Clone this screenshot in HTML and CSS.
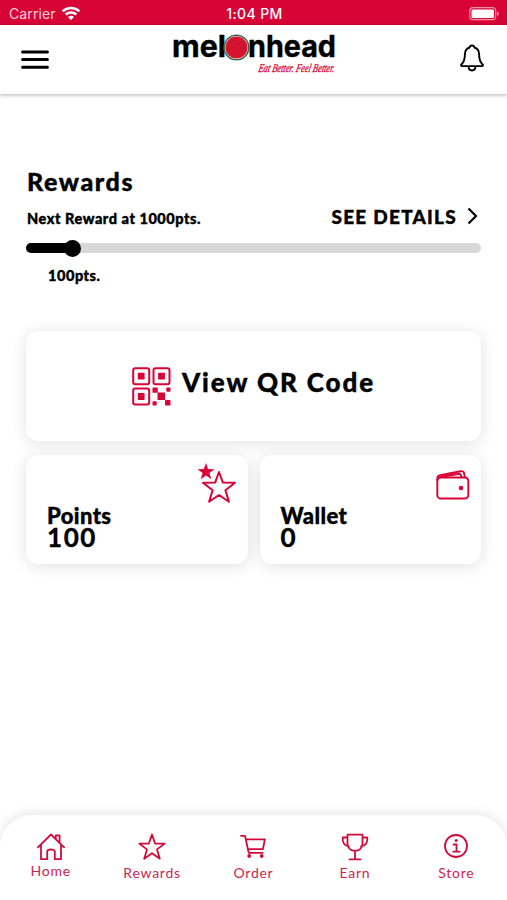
FILE: index.html
```html
<!DOCTYPE html>
<html lang="en">
<head>
    <meta charset="UTF-8">
    <meta name="viewport" content="width=device-width, initial-scale=1.0">
    <title>Melonhead Rewards</title>
    <link rel="stylesheet" href="styles.css">
</head>
<body>
    <div class="status-bar">
        <div class="carrier">
            <span>Carrier</span>
            <svg width="20" height="15" viewBox="0 0 20 15" fill="none" stroke="#fff" stroke-width="2.5">
                <path d="M1.7 5.3C6.3 .9 13.7 .9 18.3 5.3M4.7 8.5c3-2.8 7.6-2.8 10.6 0"/>
                <path d="M7 11c1.800-1.600 4.200-1.600 6 0l-3 3z" fill="#fff" stroke="none"/>
            </svg>
        </div>
        <div class="time">1:04 PM</div>
        <div class="battery">
            <svg width="31" height="14" viewBox="0 0 31 14">
                <rect x=".7" y=".7" width="26" height="12" rx="3.500" fill="none" stroke="#f291a8" stroke-width="1.200"/>
                <rect x="2.500" y="2.500" width="22.500" height="8.500" rx="1.500" fill="#fff"/>
                <path d="M28 4.500c2.400.8 2.400 3.700 0 4.500z" fill="#f291a8"/>
            </svg>
        </div>
    </div>

    <header class="header">
        <svg class="menu-icon" width="28" height="20" viewBox="0 0 28 20" stroke="#000" stroke-width="3" stroke-linecap="round">
            <path d="M1.600 2h24.800M1.600 9.600h24.800M1.600 17.300h24.800"/>
        </svg>
        <svg class="logo" width="168" height="54" viewBox="0 -4 168 54">
            <text class="logo-name" x="1" y="27" textLength="54" lengthAdjust="spacingAndGlyphs">mel</text>
            <text class="logo-name" x="77" y="27" textLength="88" lengthAdjust="spacingAndGlyphs">nhead</text>
            <circle cx="65.500" cy="17.500" r="12.300" fill="#f5e6de" stroke="#3c6b50" stroke-width="1.600"/>
            <circle cx="65.500" cy="17.500" r="11" fill="#d71432"/>
            <g fill="none" stroke="#a30f28" stroke-width="1" stroke-dasharray="1.500 2.500">
                <circle cx="65.500" cy="17.500" r="7.500"/>
                <circle cx="65.500" cy="17.500" r="4"/>
            </g>
            <text class="logo-tag" x="96" y="42.500" textLength="76" lengthAdjust="spacingAndGlyphs" transform="skewX(-12)">Eat Better. Feel Better.</text>
        </svg>
        <svg class="bell-icon" width="24" height="28" viewBox="0 0 24 28" fill="none" stroke="#000" stroke-width="1.900" stroke-linejoin="round">
            <path d="M12 1.500c-1.300 0-2.200.8-2.300 2C6.500 4.500 4.900 7 4.900 10.300c0 5.700-.7 7.700-3.500 10.200-.5.500-.3 1.600.6 1.600h20c.9 0 1.100-1.100.6-1.600-2.800-2.500-3.500-4.500-3.500-10.200 0-3.300-1.600-5.800-4.800-6.800-.1-1.200-1-2-2.300-2z"/>
            <path d="M8.600 22.500c.1 5.300 6.700 5.300 6.800 0"/>
        </svg>
    </header>

    <main class="content">
        <section class="rewards">
            <h1>Rewards</h1>
            <div class="reward-row">
                <span class="next-reward">Next Reward at 1000pts.</span>
                <a class="details">
                    <span>SEE DETAILS</span>
                    <svg width="11" height="18" viewBox="0 0 11 18" fill="none" stroke="#000" stroke-width="2.200">
                        <path d="M1.500 1.500 9 9l-7.500 7.500"/>
                    </svg>
                </a>
            </div>
            <div class="progress">
                <div class="progress-fill" style="width: 10%"></div>
            </div>
            <div class="progress-label">100pts.</div>
        </section>

        <section class="cards">
            <div class="card qr-card">
                <svg width="39" height="39" viewBox="0 0 39 39" fill="#d80436">
                    <g fill="none" stroke="#d80436" stroke-width="2">
                        <rect x="1.200" y="1.200" width="16" height="16" rx="2"/>
                        <rect x="21.500" y="1.200" width="16" height="16" rx="2"/>
                        <rect x="1.200" y="21.500" width="16" height="16" rx="2"/>
                    </g>
                    <rect x="5.800" y="5.800" width="6.800" height="6.800" rx=".7"/>
                    <rect x="26.100" y="5.800" width="6.800" height="6.800" rx=".7"/>
                    <rect x="5.800" y="26.100" width="6.800" height="6.800" rx=".7"/>
                    <rect x="20.500" y="20.500" width="5.300" height="5.300" rx=".6"/>
                    <rect x="34.300" y="20.500" width="4.200" height="4.200" rx=".8"/>
                    <rect x="25.500" y="25.500" width="7.500" height="7.500" rx=".6"/>
                    <rect x="20.500" y="34.300" width="4.200" height="4.200" rx=".8"/>
                    <rect x="33" y="33" width="5.500" height="5.500" rx=".8"/>
                </svg>
                <span>View QR Code</span>
            </div>
            <div class="card small-card">
                <svg class="card-icon" width="40" height="42" viewBox="0 0 40 42">
                    <path d="m9 0 2.100 6.100 6.400.1-5.100 3.900 1.900 6.200L9 12.600l-5.300 3.700 1.900-6.200L.5 6.200l6.400-.1z" fill="#d80436"/>
                    <path d="m22 9 3.900 10.600 12.100.2-9.600 7.400 3.500 11.600L22 32l-9.900 6.800 3.500-11.600L6 19.800l12.100-.2z" fill="none" stroke="#d80436" stroke-width="2" stroke-linejoin="round"/>
                </svg>
                <div class="card-title">Points</div>
                <div class="card-value">100</div>
            </div>
            <div class="card small-card wallet">
                <svg class="card-icon" width="34" height="30" viewBox="0 0 34 30" fill="none" stroke="#d80436" stroke-width="1.900" stroke-linejoin="round">
                    <rect x="1.300" y="7.500" width="31" height="21" rx="3.500"/>
                    <path d="M1.300 11V8.500c0-2 1-3.100 3-3.400L24.500 1.200c2-.4 3.400.5 3.700 2.300l.6 3.800M3.500 7.300l19.500-3.500c1.500 0 2.200 1.200 2.600 3.700"/>
                    <circle cx="25" cy="18" r="2.300" fill="#d80436" stroke="none"/>
                </svg>
                <div class="card-title">Wallet</div>
                <div class="card-value">0</div>
            </div>
        </section>
    </main>

    <nav class="tab-bar">
        <a class="tab home">
            <svg width="28" height="28" viewBox="0 0 28 28">
                <path d="M.9 14.300 14 1.500l13.100 12.800M4 12.500v13.700h6.200v-7.700c0-2.700 7.600-2.700 7.600 0v7.700H24V12.500M18.800 5.500V2.300h3.800v7"/>
            </svg>
            <span>Home</span>
        </a>
        <a class="tab">
            <svg width="28" height="28" viewBox="0 0 28 28">
                <path d="m14 1.500 3.100 9 9.600.1-7.700 5.800 2.800 9.300L14 20.200l-7.800 5.500L9 16.400l-7.700-5.800 9.600-.1z"/>
            </svg>
            <span>Rewards</span>
        </a>
        <a class="tab">
            <svg width="28" height="28" viewBox="0 0 28 28">
                <path d="M2 2.800h4l3.700 17h14M6.700 6.300h19.200l-2 9.800H8.900"/>
                <circle cx="10.200" cy="23" r="1.900" class="solid"/>
                <circle cx="22.700" cy="23" r="1.900" class="solid"/>
            </svg>
            <span>Order</span>
        </a>
        <a class="tab">
            <svg width="28" height="28" viewBox="0 0 28 28">
                <path d="M6.500 1.600h15v9.500c0 9-15 9-15 0zM6.500 4.500H1.700c-.4 5 1.700 8.500 6.300 8.800M21.500 4.500h4.800c.4 5-1.700 8.500-6.300 8.800M14 18v8M8.500 26.300h11"/>
            </svg>
            <span>Earn</span>
        </a>
        <a class="tab">
            <svg width="28" height="28" viewBox="0 0 28 28">
                <circle cx="14" cy="13" r="11"/>
                <path d="M11.500 11.500h3v7M11.200 18.700h6.300"/>
                <circle cx="14.200" cy="7.600" r="1.500" class="solid"/>
            </svg>
            <span>Store</span>
        </a>
    </nav>
</body>
</html>
```
FILE: styles.css
```css
* {
    margin: 0;
    padding: 0;
    box-sizing: border-box;
}

body {
    font-family: Lato, "Open Sans", sans-serif;
    background-color: #fff;
    color: #000;
    height: 900px;
    display: flex;
    flex-direction: column;
    overflow: hidden;
}

svg {
    display: block;
    flex-shrink: 0;
}

/* Status bar */
.status-bar {
    height: 25px;
    padding: 2px 7px 0 9px;
    background-color: #d80436;
    color: #fff;
    font-family: Inter, sans-serif;
    font-size: 14px;
    display: grid;
    grid-template-columns: 1fr auto 1fr;
    align-items: center;
}

.carrier {
    display: flex;
    align-items: center;
    gap: 5px;
    color: #fbd0da;
    letter-spacing: 0.1px;
}

.time {
    font-weight: 500;
    letter-spacing: 0.4px;
}

.battery {
    justify-self: end;
}

/* Header */
.header {
    height: 69px;
    padding: 0 23px 0 21px;
    display: flex;
    justify-content: space-between;
    box-shadow: 0 1px 4px rgba(0, 0, 0, 0.32);
}

.menu-icon {
    margin-top: 25px;
}

.logo {
    margin-top: 1px;
    overflow: visible;
}

.logo-name {
    font-family: Inter, sans-serif;
    font-size: 30px;
    font-weight: 700;
    stroke: #000;
    stroke-width: 0.4px;
    stroke-linejoin: round;
}

.logo-tag {
    font-family: "Liberation Serif", serif;
    font-size: 12px;
    font-style: italic;
    fill: #d80436;
    stroke: #d80436;
    stroke-width: 0.3px;
}

.bell-icon {
    margin-top: 19px;
}

/* Rewards */
.content {
    flex: 1;
    padding: 72px 26px 0;
}

h1,
.next-reward,
.progress-label,
.details,
.qr-card,
.card-title,
.card-value {
    -webkit-text-stroke: 0.4px #000;
}

h1 {
    padding-left: 1px;
    font-size: 25px;
    line-height: 30px;
    font-weight: 900;
    letter-spacing: 1.6px;
}

.reward-row {
    height: 39px;
    margin-top: 1px;
    padding: 0 3px 0 1px;
    display: flex;
    justify-content: space-between;
    align-items: center;
}

.next-reward,
.progress-label {
    font-size: 14.5px;
    font-weight: 900;
    letter-spacing: 0.55px;
}

.next-reward {
    padding-top: 3px;
}

.details {
    display: flex;
    align-items: center;
    gap: 10px;
    font-size: 19px;
    font-weight: 900;
    letter-spacing: 1.25px;
}

.details svg {
    margin-bottom: 2px;
}

.progress {
    height: 10px;
    margin-top: 7px;
    background-color: #d8d8d8;
    border-radius: 5px;
}

.progress-fill {
    position: relative;
    height: 10px;
    background-color: #000;
    border-radius: 5px;
}

.progress-fill::after {
    content: "";
    position: absolute;
    top: -3px;
    right: -9px;
    width: 17px;
    height: 17px;
    background-color: #000;
    border-radius: 50%;
}

.progress-label {
    margin: 14px 0 0 22px;
    line-height: 18px;
}

/* Cards */
.cards {
    margin-top: 46px;
    display: grid;
    grid-template-columns: 1fr 1fr;
    gap: 14px 12px;
}

.card {
    height: 110px;
    background-color: #fff;
    border-radius: 12px;
    box-shadow: 0 2px 16px rgba(0, 0, 0, 0.12);
}

.small-card {
    height: 109px;
}

.qr-card {
    grid-column: 1 / 3;
    display: flex;
    justify-content: center;
    align-items: center;
    gap: 11px;
    font-size: 26px;
    font-weight: 900;
    letter-spacing: 1.9px;
}

.qr-card span {
    padding-bottom: 8px;
}

.small-card {
    position: relative;
    padding: 49px 0 0 21px;
}

.card-icon {
    position: absolute;
    top: 8px;
    right: 11px;
}

.wallet .card-icon {
    top: 15px;
    right: 11px;
}

.card-title {
    font-size: 22px;
    line-height: 24px;
    font-weight: 900;
    letter-spacing: 0.4px;
}

.card-value {
    font-size: 26px;
    line-height: 19px;
    font-weight: 700;
    letter-spacing: 1.6px;
}

/* Bottom tabs */
.tab-bar {
    height: 85px;
    padding-top: 18px;
    display: grid;
    grid-template-columns: repeat(5, 1fr);
    background-color: #fff;
    border-radius: 32px 32px 0 0;
    box-shadow: 0 -2px 12px rgba(0, 0, 0, 0.1);
}

.tab {
    display: flex;
    flex-direction: column;
    align-items: center;
    gap: 3px;
    color: #c92650;
    font-size: 14px;
    line-height: 18px;
    letter-spacing: 0.75px;
}

.home {
    gap: 1px;
}

.tab svg {
    fill: none;
    stroke: #cf0d3d;
    stroke-width: 1.8;
    stroke-linejoin: round;
    stroke-linecap: round;
}

.tab .solid {
    fill: #cf0d3d;
    stroke: none;
}
```
